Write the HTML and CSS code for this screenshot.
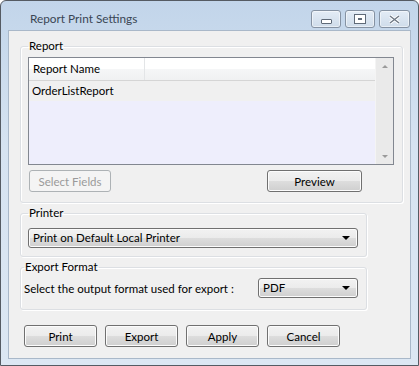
FILE: index.html
```html
<!DOCTYPE html>
<html lang="en">
<head>
  <meta charset="UTF-8">
  <title>Report Print Settings</title>
  <link rel="stylesheet" href="styles.css">
</head>
<body>
  <div class="window">
    <div class="titlebar">
      <span class="title">Report Print Settings</span>
      <div class="caption-buttons">
        <span class="cap-btn"><i class="ico-min"></i></span>
        <span class="cap-btn"><i class="ico-max"></i></span>
        <span class="cap-btn close">
          <svg width="11" height="9" viewBox="0 0 11 9"><path d="M1 1 L10 8 M10 1 L1 8" stroke="#fff" stroke-width="3.2"/><path d="M1 1 L10 8 M10 1 L1 8" stroke="#6d7784" stroke-width="1.4"/></svg>
        </span>
      </div>
    </div>

    <div class="client">
      <fieldset class="group report">
        <legend>Report</legend>
        <div class="listbox">
          <div class="list-main">
            <div class="list-header">
              <span class="col col-name">Report Name</span>
              <span class="col col-rest"></span>
            </div>
            <div class="list-row">OrderListReport</div>
          </div>
          <div class="vscroll">
            <span class="arrow-up"></span>
            <span class="arrow-down"></span>
          </div>
        </div>
        <div class="report-actions">
          <button class="btn btn-fields" disabled>Select Fields</button>
          <button class="btn btn-preview">Preview</button>
        </div>
      </fieldset>

      <fieldset class="group printer">
        <legend>Printer</legend>
        <div class="combo combo-printer">Print on Default Local Printer<span class="drop"></span></div>
      </fieldset>

      <fieldset class="group export">
        <legend>Export Format</legend>
        <div class="export-row">
          <span class="label">Select the output format used for export :</span>
          <div class="combo combo-pdf">PDF<span class="drop"></span></div>
        </div>
      </fieldset>

      <div class="footer">
        <button class="btn">Print</button>
        <button class="btn">Export</button>
        <button class="btn">Apply</button>
        <button class="btn">Cancel</button>
      </div>
    </div>
  </div>
</body>
</html>
```

FILE: styles.css
```css
body {
  margin: 0;
  background: #fff;
  font-family: Lato, "Liberation Sans", sans-serif;
  font-size: 11.5px;
  color: #000;
}

.window {
  width: 419px;
  height: 366px;
  box-sizing: border-box;
  border: 1px solid #555b63;
  border-radius: 6px 6px 0 0;
  background: linear-gradient(to bottom, #c2d5ea 0%, #d6e3f1 40%, #dce7f3 100%);
  padding: 0 7px 6px 7px;
  display: flex;
  flex-direction: column;
}

/* title bar */
.titlebar {
  height: 29px;
  display: flex;
  align-items: flex-start;
  justify-content: space-between;
}

.title {
  margin: 10px 0 0 22px;
  color: #3a4654;
  font-size: 11.8px;
}

.caption-buttons {
  display: flex;
  gap: 4px;
  margin-top: 9px;
  margin-right: 1px;
}

.cap-btn {
  width: 30px;
  height: 18px;
  box-sizing: border-box;
  border: 1px solid #8592a3;
  border-radius: 3px;
  background: linear-gradient(to bottom, #e3ecf6, #cfdcea);
  box-shadow: inset 0 0 0 1px rgba(255, 255, 255, 0.5);
  display: flex;
  align-items: center;
  justify-content: center;
}

.cap-btn.close {
  width: 31px;
}

.ico-min {
  display: block;
  width: 9px;
  height: 3px;
  margin-top: 4px;
  border: 1px solid #5f6a78;
  background: #fff;
  border-radius: 1px;
}

.ico-max {
  display: block;
  width: 6px;
  height: 4px;
  border: 2px solid #fff;
  outline: 1px solid #5f6a78;
  background: #5f6a78;
  box-shadow: inset 0 0 0 1px #fff;
}

/* client area */
.client {
  flex: 1;
  background: #f0f0f0;
  border: 1px solid #a9b8c9;
  padding: 8px 7px 0 11px;
  display: flex;
  flex-direction: column;
}

.group {
  margin: 0;
  border: 1px solid #dcdfe3;
  border-radius: 3px;
  box-shadow: 1px 1px 0 #fff inset, 1px 1px 0 #fff;
  padding: 0 8px 0 7px;
}

.group legend {
  padding: 0 1px;
  margin-left: 0;
  line-height: 14px;
}

.report {
  padding-top: 4px;
  padding-bottom: 10px;
}

.listbox {
  height: 108px;
  box-sizing: border-box;
  border: 1px solid #828790;
  display: flex;
  background: #eeeefc;
}

.list-main {
  flex: 1;
  display: flex;
  flex-direction: column;
}

.list-header {
  height: 23px;
  display: flex;
  background: linear-gradient(to bottom, #ffffff 0%, #ffffff 50%, #f5f6f7 51%, #f0f1f2 100%);
  border-bottom: 1px solid #d5d5d5;
  box-sizing: border-box;
}

.col {
  line-height: 22px;
  padding-left: 4px;
}

.col-name {
  width: 111px;
  border-right: 1px solid #e3e5e7;
}

.col-rest {
  flex: 1;
}

.list-row {
  height: 20px;
  line-height: 20px;
  padding-left: 3px;
  background: #f0f0f0;
}

.vscroll {
  width: 17px;
  background: #eaeaea;
  border-left: 1px solid #f4f4f4;
  display: flex;
  flex-direction: column;
  justify-content: space-between;
  align-items: center;
  padding: 7px 0 6px;
}

.arrow-up,
.arrow-down {
  width: 0;
  height: 0;
  border-left: 3px solid transparent;
  border-right: 3px solid transparent;
}

.arrow-up { border-bottom: 3px solid #9a9a9a; }
.arrow-down { border-top: 3px solid #9a9a9a; }

.report-actions {
  display: flex;
  justify-content: space-between;
  margin-top: 5px;
  padding-left: 1px;
  padding-right: 32px;
}

/* buttons */
.btn {
  height: 22px;
  box-sizing: border-box;
  border: 1px solid #707070;
  border-radius: 3px;
  background: linear-gradient(to bottom, #f2f2f2 0%, #ebebeb 50%, #dddddd 51%, #cfcfcf 100%);
  box-shadow: inset 0 0 0 1px #fcfcfc;
  font-family: Lato, "Liberation Sans", sans-serif;
  font-size: 11.5px;
  color: #000;
  padding: 0;
  margin: 0;
}

.btn-fields {
  width: 82px;
  color: #9a9a9a;
  border-color: #adb2b5;
  background: #f4f4f4;
  box-shadow: none;
}

.btn-preview {
  width: 95px;
}

/* printer */
.printer {
  margin-top: 3px;
  margin-right: 36px;
  padding-top: 8px;
  padding-bottom: 8px;
}

.combo {
  height: 20px;
  box-sizing: border-box;
  border: 1px solid #707070;
  border-radius: 3px;
  background: linear-gradient(to bottom, #f2f2f2 0%, #ebebeb 50%, #dddddd 51%, #cfcfcf 100%);
  box-shadow: inset 0 0 0 1px #fcfcfc;
  line-height: 18px;
  padding-left: 4px;
  white-space: nowrap;
  position: relative;
}

.drop {
  position: absolute;
  right: 7px;
  top: 7px;
  width: 0;
  height: 0;
  border-left: 4px solid transparent;
  border-right: 4px solid transparent;
  border-top: 4px solid #000;
}

/* export */
.export {
  margin-top: 3px;
  margin-right: 36px;
  padding: 4px 8px 11px 3px;
}

.export-row {
  display: flex;
  align-items: center;
  justify-content: space-between;
}

.label {
  white-space: nowrap;
}

.combo-pdf {
  width: 100px;
}

.footer {
  display: flex;
  gap: 8px;
  margin-top: 15px;
  padding-left: 4px;
}

.footer .btn {
  width: 73px;
}
```
